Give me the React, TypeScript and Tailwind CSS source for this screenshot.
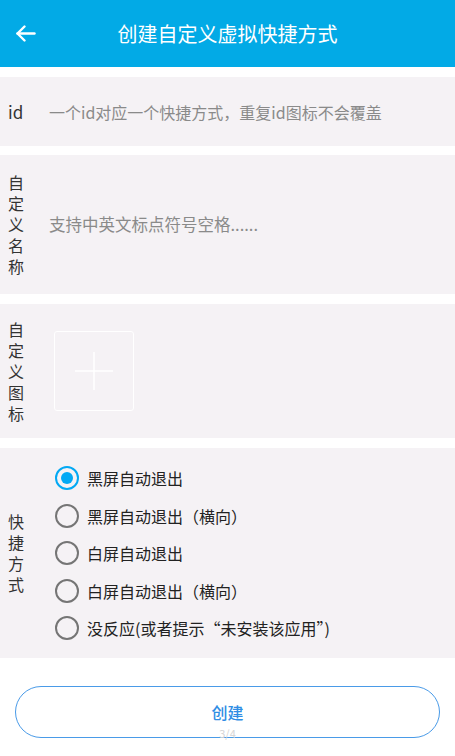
import { useState } from 'react';

const FONT = { fontFamily: '"Noto Sans CJK SC", "Noto Sans", sans-serif' };

const options = [
  '黑屏自动退出',
  '黑屏自动退出（横向）',
  '白屏自动退出',
  '白屏自动退出（横向）',
  '没反应(或者提示“未安装该应用”)',
];

function VerticalLabel({ text }: { text: string }) {
  return (
    <div className="flex w-[49px] shrink-0 flex-col pl-2 text-[16px] leading-[21px] text-[#333]">
      {text.split('').map((c, i) => (
        <span key={i}>{c}</span>
      ))}
    </div>
  );
}

export default function App() {
  const [mode, setMode] = useState(0);

  return (
    <div className="relative flex h-screen flex-col bg-white" style={FONT}>
      {/* Header */}
      <header className="flex h-[67px] shrink-0 items-center bg-[#02aae6] px-4">
        <button className="flex h-8 w-8 items-center" aria-label="返回">
          <svg width="20" height="17" viewBox="0 0 20 17" fill="none" stroke="white" strokeWidth="2.4" strokeLinecap="round" strokeLinejoin="round">
            <path d="M1.5 8.5H18.5" />
            <path d="M8.5 1.5L1.5 8.5L8.5 15.5" />
          </svg>
        </button>
        <h1 className="flex-1 pr-8 text-center text-[20px] text-white">创建自定义虚拟快捷方式</h1>
      </header>

      {/* id */}
      <section className="mt-[10px] flex h-[69px] items-center bg-[#f5f2f5]">
        <span className="w-[49px] shrink-0 pl-2 text-[17px] text-[#333]">id</span>
        <span className="text-[16px] text-[#8a8a8a]">一个id对应一个快捷方式，重复id图标不会覆盖</span>
      </section>

      {/* name */}
      <section className="mt-[9px] flex h-[139px] items-center bg-[#f5f2f5]">
        <VerticalLabel text="自定义名称" />
        <span className="text-[16.5px] text-[#8a8a8a]">支持中英文标点符号空格......</span>
      </section>

      {/* icon */}
      <section className="mt-[10px] flex h-[134px] items-center bg-[#f5f2f5]">
        <VerticalLabel text="自定义图标" />
        <div className="ml-[5px] flex h-[80px] w-[80px] items-center justify-center rounded-[3px] border-[1.5px] border-white">
          <svg width="40" height="40" viewBox="0 0 40 40" stroke="white" strokeWidth="1.5">
            <path d="M20 1V39M1 20H39" />
          </svg>
        </div>
      </section>

      {/* mode */}
      <section className="mt-[10px] flex h-[210px] items-center bg-[#f5f2f5]">
        <VerticalLabel text="快捷方式" />
        <div className="ml-[6px] flex flex-col">
          {options.map((o, i) => (
            <label key={o} className="flex h-[37.5px] cursor-pointer items-center gap-2" onClick={() => setMode(i)}>
              <span
                className={
                  mode === i
                    ? 'flex h-6 w-6 items-center justify-center rounded-full border-2 border-[#03a9f4]'
                    : 'flex h-6 w-6 items-center justify-center rounded-full border-2 border-[#757575]'
                }
              >
                {mode === i && <span className="h-3 w-3 rounded-full bg-[#03a9f4]" />}
              </span>
              <span className="text-[16px] text-[#222]">{o}</span>
            </label>
          ))}
        </div>
      </section>

      {/* Button */}
      <div className="mt-[28px] px-[15px]">
        <button className="flex h-[52px] w-full items-center justify-center rounded-full border-[1.5px] border-[#4a9be8] text-[16px] font-medium text-[#2f8de4]">
          创建
        </button>
      </div>

      <span className="absolute bottom-[15px] left-1/2 -translate-x-1/2 text-[11px] text-[#d4d4d4]">3/4</span>
    </div>
  );
}
